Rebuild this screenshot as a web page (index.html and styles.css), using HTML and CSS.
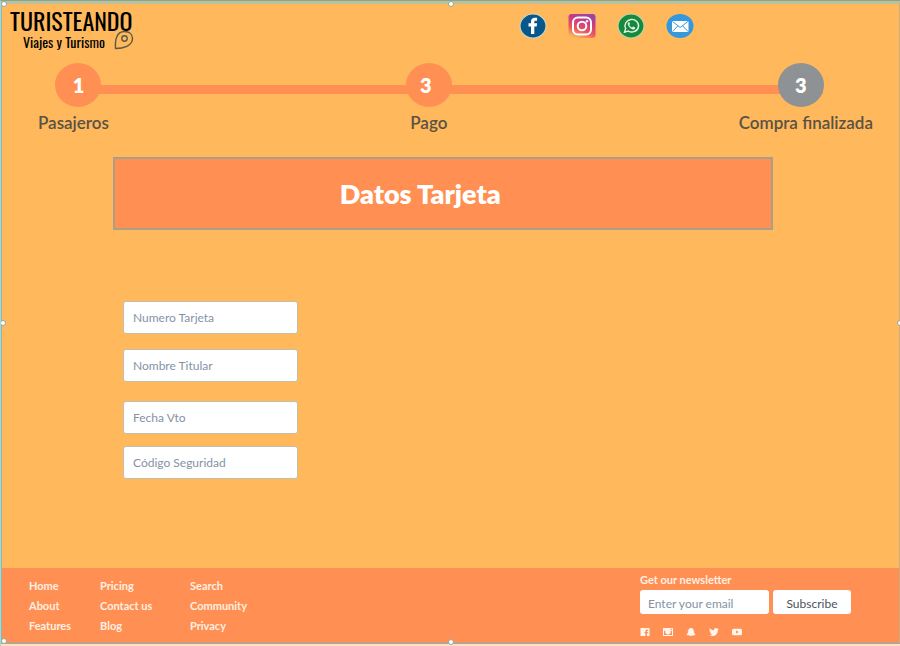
FILE: index.html
```html
<!DOCTYPE html>
<html lang="es">
<head>
<meta charset="utf-8">
<meta name="viewport" content="width=device-width, initial-scale=1">
<title>Turisteando - Datos Tarjeta</title>
<link rel="stylesheet" href="styles.css">
</head>
<body>
<div class="page">
  <i class="handle handle-tl"></i><i class="handle handle-t"></i><i class="handle handle-l"></i><i class="handle handle-r"></i><i class="handle handle-bl"></i><i class="handle handle-b"></i>
  <header class="header">
    <a class="brand" href="#">
      <span class="brand-name">TURISTEANDO</span>
      <span class="brand-tag">Viajes y Turismo</span>
      <svg class="brand-pin" viewBox="0 0 20 20" aria-hidden="true"><path d="M1.5 18.5C1 11 2 1.500 10.500 1.500C15.500 1.500 18.500 4.500 18.500 8.500C18.500 16 9 18.500 1.500 18.500Z"/><circle cx="10.500" cy="8.500" r="2.700"/></svg>
    </a>
    <nav class="contact" aria-label="Contacto">
      <a href="#" aria-label="Facebook"><svg viewBox="0 0 28 26"><ellipse cx="14" cy="13" rx="13" ry="12" fill="#07568c" stroke="#c9d3bd" stroke-width="1.200"/><path d="M12 21v-7.500H9.500v-3.300H12V8.500C12 5.800 13.500 4.700 15.800 4.700h2.300v3h-1.500c-1 0-1.300.5-1.300 1.300v1.200h2.800l-.4 3.300h-2.400V21z" fill="#fff"/></svg></a>
      <a href="#" aria-label="Instagram"><svg viewBox="0 0 28 26"><defs><linearGradient id="ig" x1="0.300" y1="1" x2="0.700" y2="0"><stop offset="0" stop-color="#fbb45c"/><stop offset=".35" stop-color="#e8565c"/><stop offset=".7" stop-color="#c93a86"/><stop offset="1" stop-color="#9545a8"/></linearGradient></defs><rect x=".5" y="1" width="27" height="24" rx="3" fill="url(#ig)"/><g fill="none" stroke="#fff" stroke-width="2"><rect x="5" y="4.500" width="18" height="17" rx="5"/><circle cx="14" cy="13" r="4.300"/></g><circle cx="19" cy="8.300" r="1.200" fill="#fff"/></svg></a>
      <a href="#" aria-label="WhatsApp"><svg viewBox="0 0 28 26"><ellipse cx="14" cy="13" rx="13" ry="12" fill="#168a3c" stroke="#bed3a8" stroke-width="1.200"/><path d="M7.500 19.300l1.200-3.800a6.800 6.300 0 1 1 2.600 2.600z" fill="none" stroke="#e6f5e5" stroke-width="1.400"/><path d="M11.500 9.300c-.8.600-1 1.700-.5 2.700 1 2.200 2.600 3.600 4.700 4.400 1 .3 2-.1 2.500-1l-.1-.8-2-1-1 1c-1.300-.5-2.300-1.400-2.900-2.600l.8-.9-.8-1.800z" fill="#e6f5e5"/></svg></a>
      <a href="#" aria-label="Correo"><svg viewBox="0 0 28 26"><ellipse cx="14" cy="13" rx="13.500" ry="12" fill="#3498db"/><rect x="6" y="8" width="16.500" height="11" rx="1" fill="#fff"/><path d="M6.500 8.500l7.700 6 7.700-6M6.500 18.500l5.200-5.500M22 18.500L16.800 13" fill="none" stroke="#3498db" stroke-width="1"/></svg></a>
    </nav>
  </header>
  <ol class="steps">
    <li class="step step-first"><span class="dot">1</span><span class="step-label">Pasajeros</span></li>
    <li class="step step-current"><span class="dot">3</span><span class="step-label">Pago</span></li>
    <li class="step step-pending"><span class="dot">3</span><span class="step-label">Compra finalizada</span></li>
  </ol>
  <main class="main">
    <h1 class="title">Datos Tarjeta</h1>
    <form class="card-form">
      <div class="field-group">
        <input type="text" placeholder="Numero Tarjeta" aria-label="Numero Tarjeta">
        <input type="text" placeholder="Nombre Titular" aria-label="Nombre Titular">
      </div>
      <div class="field-group field-group-tight">
        <input type="text" placeholder="Fecha Vto" aria-label="Fecha Vto">
        <input type="text" placeholder="Código Seguridad" aria-label="Código Seguridad">
      </div>
    </form>
  </main>
  <footer class="footer">
    <nav class="links" aria-label="Enlaces">
      <a href="#">Home</a><a href="#">Pricing</a><a href="#">Search</a>
      <a href="#">About</a><a href="#">Contact us</a><a href="#">Community</a>
      <a href="#">Features</a><a href="#">Blog</a><a href="#">Privacy</a>
    </nav>
    <form class="newsletter">
      <label for="email">Get our newsletter</label>
      <div class="signup"><input id="email" type="email" placeholder="Enter your email"><button type="button">Subscribe</button></div>
      <div class="social">
        <a href="#" aria-label="Facebook"><svg viewBox="0 0 10 8"><path d="M.5 0h9v8H7V5.200h1.200V4H7V3h1.200V1.800H6.700Q5.500 1.800 5.500 3v1H4.500v1.200h1V8h-5z"/></svg></a>
        <a href="#" aria-label="Instagram"><svg viewBox="0 0 10 8"><path fill-rule="evenodd" d="M0 0h10v8H0zM1 2.800v4.200h8V2.800H7.500a2.800 2.500 0 1 1-5 0zM7.500.7v1.100H9V.7z"/><circle cx="5" cy="4.300" r="1.700"/></svg></a>
        <a href="#" aria-label="Snapchat"><svg viewBox="0 0 10 8"><path d="M5 0C7 0 7.900 1.300 7.700 3.500L8.700 3.800 7.900 4.500Q8.400 5.700 9.700 6.200L8.500 7.300 6.500 7.400 5 8 3.500 7.400 1.500 7.300 .3 6.200Q1.600 5.700 2.100 4.500L1.300 3.800 2.300 3.500C2.100 1.300 3 0 5 0z"/></svg></a>
        <a href="#" aria-label="Twitter"><svg viewBox="0 0 10 8"><path d="M0 7.100Q1.800 7.200 3 6.200 1.500 6 1.100 4.800H2Q.5 4.200.4 2.700L1.300 3Q0 1.800.7.300 2.500 2.400 5 2.500 4.700.6 6.200.1 7.300-.2 8.200.7L9.500.2 8.800 1.300 10 1 9 2.100Q9 5.500 6.500 7.200 3.500 8.900 0 7.100z"/></svg></a>
        <a href="#" aria-label="YouTube"><svg viewBox="0 0 10 8"><path fill-rule="evenodd" d="M1.500.8h7Q10 .8 10 2.300v3.400q0 1.500-1.500 1.500h-7Q0 7.200 0 5.700V2.300Q0 .8 1.500.8zM4 2.500v3L6.700 4z"/></svg></a>
      </div>
    </form>
  </footer>
</div>
</body>
</html>
```

FILE: styles.css
```css
* { box-sizing: border-box; }
body { margin: 0; border-top: 1px solid #8aa58c; border-left: 1px solid #a9d6d6; background: #ffe1c2; font-family: Lato, "Liberation Sans", sans-serif; }
a { color: inherit; text-decoration: none; }
svg { display: block; }
input, button { font: inherit; }

.page {
  position: relative;
  display: flex;
  flex-direction: column;
  min-height: calc(100vh - 3px);
  margin-bottom: 2px;
  background: #ffb85c;
  border: solid;
  border-width: 3px 1px 2px 1px;
  border-color: #b9c19f #c4b083 #b9a390 #8fb5a5;
  box-shadow: inset 0 -1px #f5b765;
}

.handle { position: absolute; width: 6px; height: 6px; border: 1px solid #9aa795; border-radius: 3px; background: #fff; }
.handle-tl { top: -3px; left: -1px; }
.handle-t { top: -3px; left: calc(50% - 3px); }
.handle-l { top: calc(50% - 3px); left: -2px; }
.handle-r { top: calc(50% - 3px); right: -4px; }
.handle-bl { bottom: -2px; left: -1px; }
.handle-b { bottom: -3px; left: calc(50% - 3px); }

.header { display: grid; grid-template-columns: 517px 1fr; padding-top: 3px; }
.brand { position: relative; display: flex; flex-direction: column; width: 132px; padding-left: 8px; color: #000; font-family: Oswald, "Liberation Sans Narrow", "Liberation Sans", sans-serif; }
.brand-name { font-size: 24px; line-height: 27px; white-space: nowrap; }
.brand-tag { padding-left: 13px; font-size: 14px; line-height: 16px; white-space: nowrap; }
.brand-pin { position: absolute; right: 0; bottom: 0; width: 20px; height: 20px; fill: none; stroke: #5a5844; stroke-width: 1.4; }
.contact { display: flex; gap: 21px; padding-top: 6px; }
.contact svg { width: 28px; height: 26px; }

.steps { position: relative; display: flex; justify-content: space-between; margin: 13px 26px 0 36px; padding: 0; list-style: none; }
.steps::before { content: ""; position: absolute; top: 22px; left: 40px; right: 50px; height: 9px; background: #ff8f52; }
.step { position: relative; display: flex; flex-direction: column; align-items: center; gap: 6px; }
.step-current { margin-left: 10px; }
.dot { display: grid; place-items: center; width: 46px; height: 44px; border-radius: 50%; background: #ff8f52; color: #fff; font-size: 20px; font-weight: 800; }
.step-first .dot { margin-left: 10px; }
.step-current .dot { padding-right: 6px; }
.step-pending .dot { margin-right: 10px; background: #8f9294; }
.step-label { color: #5a5244; font-size: 17px; font-weight: 600; line-height: 20px; }

.main { flex: 1; padding: 24px 14% 0 111px; }
.title { margin: 0; padding: 18px 46px 18px 0; border: 2px solid #a8a087; background: #ff8f52; color: #fff; font-size: 27px; font-weight: 800; line-height: 33px; text-align: center; }
.card-form { display: flex; flex-direction: column; gap: 19px; width: 175px; margin: 71px 0 0 10px; }
.field-group { display: flex; flex-direction: column; gap: 15px; }
.field-group-tight { gap: 12px; }
.card-form input { width: 100%; height: 33px; padding: 0 9px; border: 1px solid #c4bfaa; border-radius: 3px; background: #fff; color: #4b5568; font-size: 12px; }
input::placeholder { color: #8592a6; opacity: 1; }

.footer { display: flex; justify-content: space-between; padding: 4px 48px 6px 27px; background: #ff8f52; color: #fff0e2; font-size: 11px; }
.links { display: grid; grid-template-columns: 71px 90px auto; grid-auto-rows: 20px; align-content: start; padding-top: 4px; line-height: 20px; font-weight: 700; }
.newsletter { display: flex; flex-direction: column; }
.newsletter label { line-height: 16px; font-weight: 700; }
.signup { display: flex; gap: 4px; margin-top: 2px; font-size: 12px; }
.signup input { width: 129px; height: 24px; padding: 3px 8px 0; border: 0; border-radius: 3px; background: #fff; }
.signup button { width: 78px; height: 24px; padding: 3px 0 0; border: 0; border-radius: 3px; background: #fff; color: #4d535c; }
.social { display: flex; gap: 13px; margin-top: 14px; }
.social svg { width: 10px; height: 8px; fill: #fff5ec; }
```
